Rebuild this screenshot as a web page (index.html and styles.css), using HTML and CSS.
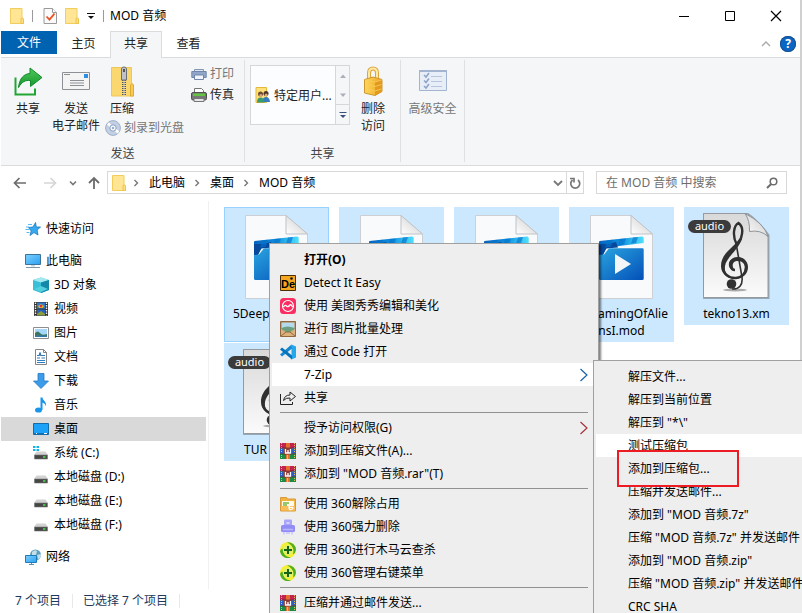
FILE: index.html
```html
<!DOCTYPE html>
<html lang="zh-CN">
<head>
<meta charset="utf-8">
<title>MOD 音频</title>
<link rel="stylesheet" href="styles.css">
</head>
<body>
<svg class="defs" aria-hidden="true">
  <defs>
    <linearGradient id="gBlue" x1="0" y1="0" x2="1" y2="1"><stop offset="0" stop-color="#2aa5e0"/><stop offset="1" stop-color="#0450b8"/></linearGradient>
    <linearGradient id="gStrip" x1="0" y1="0" x2="1" y2="0"><stop offset="0" stop-color="#0562bd"/><stop offset=".5" stop-color="#0e8fdf"/><stop offset="1" stop-color="#4fe0fd"/></linearGradient>
    <linearGradient id="gPage" x1="0" y1="0" x2="0" y2="1"><stop offset="0" stop-color="#d9d9d9"/><stop offset="1" stop-color="#fbfbfb"/></linearGradient>
    <linearGradient id="gFold" x1="0" y1="1" x2="1" y2="0"><stop offset="0" stop-color="#fff"/><stop offset="1" stop-color="#c9c9c9"/></linearGradient>
    <linearGradient id="gGreen" x1="0" y1="0" x2="0" y2="1"><stop offset="0" stop-color="#4fc95a"/><stop offset="1" stop-color="#15962e"/></linearGradient>
    <linearGradient id="gGold" x1="0" y1="0" x2="1" y2="0"><stop offset="0" stop-color="#ffd75a"/><stop offset="1" stop-color="#eda41f"/></linearGradient>
    <linearGradient id="gScreen" x1="0" y1="0" x2="1" y2="1"><stop offset="0" stop-color="#7cd0ff"/><stop offset="1" stop-color="#2ba0f0"/></linearGradient>
  </defs>
  <symbol id="folder" viewBox="0 0 14 16"><path d="M.5.5h11.500v9.500l1.500 1v4.500H.5z" fill="#ffe594" stroke="#f2cd5c"/><path d="M11 15.500v-5l1.500-.5 1 1v4.500z" fill="#ffe07c" stroke="#edc350"/></symbol>
  <symbol id="doc-check" viewBox="0 0 14 16"><path d="M1 .5h8.500l4 4v11H1z" fill="#fafafa" stroke="#9a9a9a"/><path d="M9.500.5v4h4" fill="#fff" stroke="#9a9a9a"/><path d="M3.500 8.500l3 3.200 5-6" fill="none" stroke="#e85326" stroke-width="1.800"/></symbol>
  <symbol id="share-big" viewBox="0 0 32 32"><path d="M3.500 11.500v17h19.500v-6" fill="none" stroke="#22a535" stroke-width="2"/><path d="M6.500 21.500C7.500 12 12 8 18 7.500V2l12 9.500-11.500 9v-6c-5-.5-8.500 1-12 7z" fill="url(#gGreen)" stroke="#128b2c"/></symbol>
  <symbol id="mail" viewBox="0 0 32 32"><path d="M2.500 6.500h27v17h-27z" fill="#f4f4f4" stroke="#8d9196"/><path d="M24 8h4v4h-4z" fill="#2c8fe6"/><path d="M4 8.500h6M10 14.500h14M10 17h14M10 19.500h14" stroke="#8d9196"/></symbol>
  <symbol id="zip" viewBox="0 0 32 32"><path d="M5.500 1.500h20v16l2 1.500v11h-22z" fill="#fbd86f" stroke="#efc65a"/><path d="M24.500 30v-11l1.500-1.500 1.500 1.500v11z" fill="#f9ca4f" stroke="#e0ab31"/><path d="M18 12v18" stroke="#555" stroke-width="4" stroke-dasharray="1 1"/><path d="M18 12v18" stroke="#d8d8d8"/><path d="M15.500 3q0-2 2.500-2t2.500 2v11h-5z" fill="#bfc3c8" stroke="#6c7076"/><path d="M17 3h2v3h-2z" fill="#555"/></symbol>
  <symbol id="disc" viewBox="0 0 16 16"><circle cx="8" cy="8" r="7.400" fill="#c3d0e3" stroke="#9fb0c9"/><path d="M3 3.500l3 3M10 9.500l3.500 3" stroke="#fff" stroke-width="2.500"/><circle cx="8" cy="8" r="3.200" fill="#eff4fa" stroke="#8ba0c2"/><circle cx="8" cy="8" r="1" fill="#7f96bb"/></symbol>
  <symbol id="printer" viewBox="0 0 16 16"><path d="M3.500 3.500h9v3h-9z" fill="#dce5f2" stroke="#8296b6"/><path d="M.8 5.500h14.400v6H.8z" fill="#91a6c8" stroke="#7186a9"/><path d="M3.500 9h9v4.500h-9z" fill="#f0f5fc" stroke="#7186a9"/></symbol>
  <symbol id="fax" viewBox="0 0 16 16"><path d="M3.500 5.500v-4h7l2 2v2" fill="#fff" stroke="#777"/><rect x=".5" y="5.500" width="15" height="7.500" rx="1.500" fill="#777" stroke="#4e4e4e"/><path d="M2 6.500h12v2.500H2z" fill="#66c342"/><path d="M3 11.500h10v3H3z" fill="#e6e6e6" stroke="#777"/></symbol>
  <symbol id="users" viewBox="0 0 16 16"><path d="M1 .5h10.500v15H1z" fill="#ffe07a" stroke="#e3b93c"/><circle cx="5.500" cy="7" r="2.500" fill="#704b31"/><circle cx="11" cy="6.500" r="2.500" fill="#4d3527"/><path d="M7.500 15q0-5 3.500-5t4 5z" fill="#337cc0"/><path d="M2 15.500q0-5 3.500-5t4 5z" fill="#389a72"/><circle cx="5.800" cy="8.500" r="1.500" fill="#dba77b"/><circle cx="11.200" cy="8" r="1.500" fill="#dba77b"/></symbol>
  <symbol id="lock" viewBox="0 0 32 32"><path d="M12 14V7q0-4.500 4-4.500t4 4.500v8" fill="none" stroke="#dba63a" stroke-width="4"/><path d="M12 14V7q0-4.500 4-4.500t4 4.500v8" fill="none" stroke="#ffe8a8" stroke-width="2"/><path d="M7.500 13.500L16 11l9 2.500v12L18 29.500 7.500 27z" fill="url(#gGold)" stroke="#cf9630"/><path d="M18 16l7-2.500v12l-7 4z" fill="#e39a1c"/><path d="M8 14l10 2 6.500-2M8 18.500l10 2 6.500-2M8 23l10 2 6.500-2" fill="none" stroke="#f7cd63" stroke-width=".8"/></symbol>
  <symbol id="security" viewBox="0 0 32 32"><path d="M2.500 4.500h27v20h-27z" fill="#e7eef8" stroke="#a3b4d1"/><path d="M2 4h28v2H2z" fill="#a3b4d1"/><path d="M7 9l2 2 3-4M7 14.500l2 2 3-4M7 20l2 2 3-4" fill="none" stroke="#8ea3c5" stroke-width="1.500"/><path d="M14 10.500h11M14 15.500h11M14 20.500h11" stroke="#b6c5dc"/></symbol>
  <symbol id="star" viewBox="0 0 16 16"><path d="M10.500 1.500l.8 4.500h4.200l-3.400 3 .9 5-4-2.500-4 3 1.200-4.500L3.500 6.500l4.500-.5z" fill="#36a9ef" stroke="#1879c4" stroke-width=".8"/><path d="M3 3.500h4M1 6h3M.5 8.500h4M1.500 11.500h3" stroke="#5db9f1"/></symbol>
  <symbol id="pc" viewBox="0 0 16 16"><path d="M.5 1.500h15v10H.5z" fill="url(#gScreen)" stroke="#3a749b"/><path d="M6 12h4v1.500H6z" fill="#c6d4de"/><path d="M1 14.500h14" stroke="#8296a4"/></symbol>
  <symbol id="cube" viewBox="0 0 16 16"><path d="M8 .5l8 2.500v10l-8 3-8-3V3z" fill="#39bfd7"/><path d="M0 3l8-2.500L16 3 8 5.500z" fill="#a4e8f0"/><path d="M8 5.500L16 3v10l-8 3z" fill="#1389aa"/><path d="M1 12l7-3 7 3-7 3z" fill="#52d0dd"/></symbol>
  <symbol id="film" viewBox="0 0 16 16"><path d="M1 1h14v14H1z" fill="#333"/><path d="M4 1.500h8v6H4z" fill="#3178cb"/><path d="M4 8.500h8v6H4z" fill="#2662b9"/><path d="M5 5l3-2 3 2-1 2H6z" fill="#e0b52e"/><path d="M4 13l4-3 4 3v1.500H4z" fill="#8c9c38"/><circle cx="8" cy="5" r="1.300" fill="#d8343b"/><path d="M2.500 1.500v13M13.500 1.500v13" stroke="#eee" stroke-width="1.400" stroke-dasharray="1.500 1"/></symbol>
  <symbol id="picture" viewBox="0 0 16 16"><path d="M.5 2.500h15v11H.5z" fill="#fff" stroke="#8e8e8e"/><path d="M2 4h12v8H2z" fill="#a6d7fa"/><path d="M2 8q3-3 5 0t7 1v3H2z" fill="#3d7461"/><path d="M2 10.500h12V12H2z" fill="#3278ac"/></symbol>
  <symbol id="document" viewBox="0 0 16 16"><path d="M2.500.5h8l3 3v12h-11z" fill="#fff" stroke="#858585"/><path d="M10.500.5v3h3" fill="none" stroke="#858585"/><path d="M4 6.500h2l1-3 1 3h4M4 9h3M8.500 9H12M4 11.500h8M4 13.500h8" stroke="#2d7fc1"/></symbol>
  <symbol id="download" viewBox="0 0 16 16"><path d="M5 .5h6V8h4.500L8 15.500.5 8H5z" fill="#3c9cea" stroke="#2479c1" stroke-width=".8"/></symbol>
  <symbol id="music" viewBox="0 0 16 16"><ellipse cx="5.500" cy="13" rx="3.500" ry="2.600" fill="#1996ea"/><path d="M7.500.5h2c0 3 4.500 4 3.500 9-.5-3-3-3.500-3.500-4V13h-2z" fill="#1996ea"/></symbol>
  <symbol id="desktop" viewBox="0 0 16 16"><path d="M.5 2.500h15v11H.5z" fill="#1ca2f8" stroke="#176ca8"/><path d="M1 12.500h14" stroke="#0875bb"/><path d="M3 12.500h1M11 12.500h3" stroke="#fff"/></symbol>
  <symbol id="drive" viewBox="0 0 16 16"><path d="M3.500 6.500h9L15 10H1z" fill="#d2d2d2"/><path d="M1.500 10h13v4h-13z" fill="#454545" stroke="#777" stroke-width=".6"/><path d="M10 12h2.500" stroke="#4de34d" stroke-width="1.500"/></symbol>
  <symbol id="winlogo" viewBox="0 0 16 16"><path d="M0 1h2.500v2H0zM3.500 1H6v2H3.500zM0 4h2.500v2H0zM3.500 4H6v2H3.500z" fill="#15b1ea"/></symbol>
  <symbol id="network" viewBox="0 0 16 16"><circle cx="10.500" cy="6" r="5.500" fill="#5f9fbb"/><path d="M7 3q3-3 5-1l-1 4-4 1zM12 6l4-1q0 5-3 5z" fill="#c4dfe8"/><path d="M.5 6.500h11v7H.5z" fill="url(#gScreen)" stroke="#207cb9"/><path d="M4 15.500h5M6.500 14v1" stroke="#638fa9"/></symbol>
  <symbol id="mod-file" viewBox="0 0 105 92"><path d="M21.500 8.500H62L83.500 27v64.500h-62z" fill="#f9fafb" stroke="#ccd0d5"/><path d="M62 8.500V27h21.500z" fill="url(#gFold)" stroke="#bec3c8"/><path d="M30.500 34L73 29.500q1.700 0 1.700 1.500v5L38 40.500l-4 7h-4V35z" fill="url(#gStrip)"/><path d="M30 37h9l8-2 2 5.500-12 1-3 6.500h-4z" fill="#06489b"/><path d="M38 33.500l6-.7-2 7-6 .8zM51 32l6-.6-2 6.200-6 .8zM64 30.500l5-.5-2 6-5 .7z" fill="#0671ca" opacity=".65"/><path d="M30 48l5-.5 4-5q.5-1.200 2-1.200h32.500q1.200 0 1.200 1.200v29q0 1.500-1.500 1.500H31.500Q30 73 30 71.500z" fill="url(#gBlue)"/><path d="M46 47l16 10-16 10z" fill="#f4f5f6"/></symbol>
  <symbol id="audio-file" viewBox="0 0 105 92"><path d="M20 7h44q8 5 20.500 21v63.500H20z" fill="none" stroke="#6c747c" stroke-width="2" opacity=".55"/><path d="M19.500 6.500H63Q78 17 84 28v62.500H19.500z" fill="url(#gPage)" stroke="#969a9e"/><path d="M61 6.500q5 7 4.500 18 11-2 18.500 5Q80 16 61 6.500z" fill="url(#gFold)" stroke="#8f9498"/><ellipse cx="51" cy="83" rx="12" ry="1.500" fill="#aaa"/><path d="M52.500 37C48 28 50 18 54.500 16 58.500 19 59 25 57 31 53 40 39 46 39 59 39 67 45 71.500 52 71 58 70.500 62 66 62 60 62 54.500 58 51.500 54 51.500 49 51.500 45.500 55 46.500 59 47 61.500 49 63 51 63" fill="none" stroke="#303030" stroke-width="2.400"/><path d="M57 32C50 40 37 46 37 59c0 9 8 13 15 13C43 71 40 65 41 59c1-8 13-16 17-27zM54 50c-6 0-10 4-9 9 1 3 3 4 6 4-3-2-4-9 3-9 4 0 7 3 7 6 0 7-5 11-9 12 8-1 12-6 12-12s-5-10-10-10z" fill="#303030"/><path d="M52 36l6 34c1 8-3 12.500-10 12" fill="none" stroke="#303030" stroke-width="1.600"/><circle cx="47.500" cy="77" r="4.800" fill="#303030"/></symbol>
  <symbol id="meitu" viewBox="0 0 16 16"><rect width="16" height="16" rx="3.500" fill="#fb2d61"/><circle cx="8" cy="8" r="5.500" fill="none" stroke="#fff" stroke-width="1.200"/><path d="M3.500 9Q5 6.500 6.500 8t3-.5T12.500 9" fill="none" stroke="#fff" stroke-width="1.300"/></symbol>
  <symbol id="batch" viewBox="0 0 16 16"><path d="M.5.500h15v15H.5z" fill="#b57a42" stroke="#94683f"/><path d="M1.500 1.500h13V9h-13z" fill="#b4daee"/><path d="M1.500 7q6-3 13 0v4h-13z" fill="#6b9f80"/><path d="M1 8l5 3h4l5-3v7H1z" fill="#dcb27c"/><path d="M1 15l5-4h4l5 4" fill="none" stroke="#94683f"/></symbol>
  <symbol id="vscode" viewBox="0 0 16 16"><path d="M11.500.5L16 2.500v11l-4.500 2z" fill="#25a7ed"/><path d="M11.500.5L0 10.500 2 12.500 12 4.500z" fill="#1787ce"/><path d="M0 5.500l2-2 10 8v4z" fill="#0873ba"/></symbol>
  <symbol id="share-line" viewBox="0 0 16 16"><path d="M.5 4v10.500h12V12" fill="none" stroke="#222"/><path d="M3.500 10.500Q4.500 5 10 5V2l5.500 4.500L10 11V8q-4-.5-6.500 2.500z" fill="none" stroke="#222"/></symbol>
  <symbol id="winrar" viewBox="0 0 16 16"><path d="M0 0h16v5H0z" fill="#c32350"/><path d="M0 5.500h16v5H0z" fill="#2b5fc6"/><path d="M0 11h16v5H0z" fill="#1d8a45"/><path d="M1.500 0v16M14.500 0v16" stroke="#eac357" stroke-dasharray="1 1"/><path d="M0 5.200h16M0 10.700h16" stroke="#20203a" stroke-width=".8"/><path d="M6 0h4v16H6z" fill="#e5702b"/><path d="M4 4.500h8v7H4z" fill="#8c3a35"/><path d="M5.500 6v4h5V6M8 7v3" fill="none" stroke="#fff" stroke-width="1.300"/><path d="M7.500 12v4" stroke="#f3be6b"/></symbol>
  <symbol id="unlock360" viewBox="0 0 16 16"><path d="M.5 1.500h6l1 1.500h8v12H.5z" fill="#f4b33e" stroke="#d99a38"/><path d="M2 5h12v5H2z" fill="#fffbe5"/><path d="M3 7h6M3 9h4" stroke="#79b545" stroke-width="1.500"/><path d="M1 10h14v4.500H1z" fill="#f9be5a"/><path d="M12 8Q9 9 9 11.500t2 2 2-1.500-3.500-.500" fill="none" stroke="#fff" stroke-width="1.200"/></symbol>
  <symbol id="shred360" viewBox="0 0 16 16"><rect x="4" y=".5" width="8" height="7" rx="1" fill="#a9a5fb"/><path d="M6.500 4h3" stroke="#fff"/><rect x="1" y="6" width="14" height="7" rx="1.500" fill="#928cf5"/><path d="M3 10.500h10" stroke="#b9b5ff" stroke-width="1.500"/><path d="M4 13v2.500M12 13v2.500M6 14h4" stroke="#c5c2ff" stroke-width="1.500"/></symbol>
  <symbol id="plus360" viewBox="0 0 16 16"><circle cx="8" cy="8" r="8" fill="#f3ef35"/><path d="M7 .2A8 8 0 0 1 16 8q-.5 3-3 4.500Q15 4 7 .2z" fill="#4fae24"/><path d="M0 9a8 8 0 0 0 11 6.500Q3 15 2.500 6.500 .5 7 0 9z" fill="#4fae24"/><circle cx="8" cy="8" r="5" fill="#dff06a"/><path d="M8 4v8M4 8h8" stroke="#14641c" stroke-width="2"/></symbol>
  <symbol id="chev" viewBox="0 0 8 8"><path d="M2.500 1l3 3-3 3" fill="none" stroke="#777" stroke-width="1.400"/></symbol>
  <symbol id="chev-down" viewBox="0 0 10 10"><path d="M1 3l4 4 4-4" fill="none" stroke="#777" stroke-width="1.800"/></symbol>
  <symbol id="sub-arrow" viewBox="0 0 10 14"><path d="M1.500 1L8 7l-6.500 6" fill="none" stroke="currentColor" stroke-width="1.200"/></symbol>
</svg>

<div class="window">
  <header class="titlebar">
    <svg class="folder"><use href="#folder"/></svg>
    <span class="bar"></span>
    <svg class="folder"><use href="#doc-check"/></svg>
    <svg class="folder"><use href="#folder"/></svg>
    <button class="quick" aria-label="自定义快速访问工具栏"><svg viewBox="0 0 8 8"><path d="M0 1.500h8" stroke="#111"/><path d="M1 4h6L4 7z" fill="#111"/></svg></button>
    <span class="bar"></span>
    <h1>MOD 音频</h1>
    <div class="controls">
      <button aria-label="最小化"><svg viewBox="0 0 12 12"><path d="M1 6.500h10" stroke="#000"/></svg></button>
      <button aria-label="最大化"><svg viewBox="0 0 12 12"><path d="M1.500 1.500h9v9h-9z" fill="none" stroke="#000"/></svg></button>
      <button aria-label="关闭"><svg viewBox="0 0 12 12"><path d="M1 1l10 10M11 1L1 11" stroke="#000" stroke-width="1.200"/></svg></button>
    </div>
  </header>

  <nav class="tabs">
    <button class="tab file">文件</button>
    <button class="tab">主页</button>
    <button class="tab active">共享</button>
    <button class="tab">查看</button>
    <div class="tabs-end">
      <button class="collapse" aria-label="折叠功能区"><svg viewBox="0 0 10 10"><path d="M1 7l4-4 4 4" fill="none" stroke="#aaa" stroke-width="1.400"/></svg></button>
      <button class="help">?</button>
    </div>
  </nav>

  <section class="ribbon">
    <div class="group">
      <div class="group-body">
        <button class="big"><svg><use href="#share-big"/></svg>共享</button>
        <button class="big wide"><svg><use href="#mail"/></svg>发送<br>电子邮件</button>
        <div class="stack">
          <button class="big zip"><svg><use href="#zip"/></svg>压缩</button>
          <button class="small muted"><svg><use href="#disc"/></svg>刻录到光盘</button>
        </div>
        <div class="pair">
          <button class="small muted"><svg><use href="#printer"/></svg>打印</button>
          <button class="small"><svg><use href="#fax"/></svg>传真</button>
        </div>
      </div>
      <div class="group-name">发送</div>
    </div>
    <div class="group">
      <div class="group-body">
        <div class="gallery">
          <button class="gallery-item"><svg><use href="#users"/></svg>特定用户...</button>
          <div class="gallery-scroll">
            <button aria-label="上一行"><svg viewBox="0 0 8 8"><path d="M1 6h6L4 2.500z" fill="#aaafb8"/></svg></button>
            <button aria-label="下一行"><svg viewBox="0 0 8 8"><path d="M1 2.500h6L4 6z" fill="#aaafb8"/></svg></button>
            <button aria-label="更多"><svg viewBox="0 0 8 8"><path d="M.5 1.500h7" stroke="#37517a"/><path d="M1 4h6L4 7z" fill="#37517a"/></svg></button>
          </div>
        </div>
        <button class="big"><svg><use href="#lock"/></svg>删除<br>访问</button>
      </div>
      <div class="group-name">共享</div>
    </div>
    <div class="group">
      <div class="group-body">
        <button class="big security muted"><svg><use href="#security"/></svg>高级安全</button>
      </div>
      <div class="group-name"></div>
    </div>
  </section>

  <div class="navbar">
    <button class="nav-btn" aria-label="后退"><svg viewBox="0 0 14 14"><path d="M13 7H2M6.500 2L1.500 7l5 5" fill="none" stroke="#6c6c6c" stroke-width="1.700"/></svg></button>
    <button class="nav-btn" aria-label="前进"><svg viewBox="0 0 14 14"><path d="M1 7h11M7.500 2l5 5-5 5" fill="none" stroke="#d6d6d6" stroke-width="1.700"/></svg></button>
    <button class="nav-btn narrow" aria-label="最近位置"><svg viewBox="0 0 10 10"><path d="M2 3.500l3 3 3-3" fill="none" stroke="#777" stroke-width="1.600"/></svg></button>
    <button class="nav-btn up" aria-label="上移"><svg viewBox="0 0 14 14"><path d="M7 13V2M2 7l5-5 5 5" fill="none" stroke="#6c6c6c" stroke-width="1.800"/></svg></button>
    <div class="address">
      <svg class="folder"><use href="#folder"/></svg>
      <svg class="sep"><use href="#chev"/></svg>
      <a href="#">此电脑</a>
      <svg class="sep"><use href="#chev"/></svg>
      <a href="#">桌面</a>
      <svg class="sep"><use href="#chev"/></svg>
      <a href="#">MOD 音频</a>
      <button class="drop" aria-label="历史"><svg><use href="#chev-down"/></svg></button>
      <button class="refresh" aria-label="刷新"><svg viewBox="0 0 12 12"><path d="M9 3A4.500 4.500 0 1 1 3.500 3M1 1.500h4V5.500" fill="none" stroke="#777" stroke-width="1.700"/></svg></button>
    </div>
    <label class="search">
      <input type="text" placeholder="在 MOD 音频 中搜索" aria-label="搜索">
      <svg viewBox="0 0 12 12"><circle cx="7.500" cy="4.500" r="3.300" fill="none" stroke="#6c6c6c" stroke-width="1.500"/><path d="M5.200 7L1 11" stroke="#6c6c6c" stroke-width="2"/></svg>
    </label>
  </div>

  <main class="content">
    <nav class="sidebar">
      <a href="#" class="root"><svg><use href="#star"/></svg>快速访问</a>
      <div class="tree">
        <a href="#" class="root"><svg><use href="#pc"/></svg>此电脑</a>
        <a href="#"><svg><use href="#cube"/></svg>3D 对象</a>
        <a href="#"><svg><use href="#film"/></svg>视频</a>
        <a href="#"><svg><use href="#picture"/></svg>图片</a>
        <a href="#"><svg><use href="#document"/></svg>文档</a>
        <a href="#"><svg><use href="#download"/></svg>下载</a>
        <a href="#"><svg><use href="#music"/></svg>音乐</a>
        <a href="#" class="current"><svg><use href="#desktop"/></svg>桌面</a>
        <a href="#"><svg><use href="#drive"/><use href="#winlogo"/></svg>系统 (C:)</a>
        <a href="#"><svg><use href="#drive"/></svg>本地磁盘 (D:)</a>
        <a href="#"><svg><use href="#drive"/></svg>本地磁盘 (E:)</a>
        <a href="#"><svg><use href="#drive"/></svg>本地磁盘 (F:)</a>
      </div>
      <a href="#" class="root"><svg><use href="#network"/></svg>网络</a>
    </nav>

    <section class="files">
      <button class="tile focus from-left"><svg><use href="#mod-file"/></svg><span>5Deep</span></button>
      <button class="tile" aria-label="MOD 文件"><svg><use href="#mod-file"/></svg></button>
      <button class="tile" aria-label="MOD 文件"><svg><use href="#mod-file"/></svg></button>
      <button class="tile from-right"><svg><use href="#mod-file"/></svg><span>amingOfAlie</span><span class="rest">nsI.mod</span></button>
      <button class="tile"><svg><use href="#audio-file"/></svg><i class="badge">audio</i><span>tekno13.xm</span></button>
      <button class="tile indent"><svg><use href="#audio-file"/></svg><i class="badge">audio</i><span>TUR</span></button>
    </section>
  </main>

  <footer class="status"><span>7 个项目</span><span>已选择 7 个项目</span></footer>
</div>

<div class="menu main-menu" role="menu">
  <button role="menuitem" class="default">打开(O)</button>
  <button role="menuitem"><svg viewBox="0 0 16 16"><path d="M.5.500h15v15H.5z" fill="#f4a71f" stroke="#4c2d08"/><text x="1" y="13" class="de">De</text><circle cx="11.500" cy="3.500" r="1.300" fill="#111"/></svg>Detect It Easy</button>
  <button role="menuitem"><svg><use href="#meitu"/></svg>使用 美图秀秀编辑和美化</button>
  <button role="menuitem"><svg><use href="#batch"/></svg>进行 图片批量处理</button>
  <button role="menuitem"><svg><use href="#vscode"/></svg>通过 Code 打开</button>
  <button role="menuitem" class="hover">7-Zip<svg class="arrow blue"><use href="#sub-arrow"/></svg></button>
  <button role="menuitem"><svg><use href="#share-line"/></svg>共享</button>
  <hr>
  <button role="menuitem">授予访问权限(G)<svg class="arrow red"><use href="#sub-arrow"/></svg></button>
  <button role="menuitem"><svg><use href="#winrar"/></svg>添加到压缩文件(A)...</button>
  <button role="menuitem"><svg><use href="#winrar"/></svg>添加到 "MOD 音频.rar"(T)</button>
  <hr>
  <button role="menuitem"><svg><use href="#unlock360"/></svg>使用 360解除占用</button>
  <button role="menuitem"><svg><use href="#shred360"/></svg>使用 360强力删除</button>
  <button role="menuitem"><svg><use href="#plus360"/></svg>使用 360进行木马云查杀</button>
  <button role="menuitem"><svg><use href="#plus360"/></svg>使用 360管理右键菜单</button>
  <hr>
  <button role="menuitem"><svg><use href="#winrar"/></svg>压缩并通过邮件发送...</button>
</div>

<div class="menu sub-menu" role="menu">
  <button role="menuitem">解压文件...</button>
  <button role="menuitem">解压到当前位置</button>
  <button role="menuitem">解压到 "*\"</button>
  <button role="menuitem" class="hover">测试压缩包</button>
  <button role="menuitem" class="marked">添加到压缩包...</button>
  <button role="menuitem">压缩并发送邮件...</button>
  <button role="menuitem">添加到 "MOD 音频.7z"</button>
  <button role="menuitem">压缩 "MOD 音频.7z" 并发送邮件</button>
  <button role="menuitem">添加到 "MOD 音频.zip"</button>
  <button role="menuitem">压缩 "MOD 音频.zip" 并发送邮件</button>
  <button role="menuitem">CRC SHA</button>
</div>
</body>
</html>
```
FILE: styles.css
```css
*, *::before { box-sizing: border-box; }

body {
  margin: 0;
  height: 100vh;
  overflow: hidden;
  position: relative;
  background: #d0d0d0;
  color: #000;
  font: 12px/17px "Noto Sans", "Noto Sans CJK SC", sans-serif;
}

button, input {
  margin: 0;
  padding: 0;
  border: 0;
  background: none;
  color: inherit;
  font: inherit;
}

a { color: inherit; text-decoration: none; }
svg { display: block; flex: none; width: 16px; height: 16px; }
.defs { position: absolute; width: 0; height: 0; }
.folder { width: 14px; height: 16px; }

.window {
  display: flex;
  flex-direction: column;
  height: 100%;
  margin-right: 2px;
  padding-left: 1px;
  background: #fff;
}

/* Title bar */
.titlebar { display: flex; align-items: center; gap: 8px; height: 31px; padding-left: 9px; }
.titlebar h1 { margin: 0; font-size: 12px; font-weight: 400; }
.titlebar .bar { width: 1px; height: 12px; margin-right: 2px; background: #9a9a9a; }
.titlebar .bar + h1 { margin-left: -4px; }
.quick svg { width: 8px; height: 8px; }
.controls { display: flex; margin-left: auto; padding-right: 1px; }
.controls button { display: grid; place-items: center; width: 46px; height: 31px; }
.controls svg { width: 12px; height: 12px; }

/* Tabs */
.tabs { display: flex; height: 27px; border-bottom: 1px solid #dadbdc; }
.tab { width: 53px; height: 24px; color: #222; }
.tab.file { width: 56px; height: 23px; background: #0063b1; color: #fff; }
.tab.active { width: 52px; height: 27px; padding-bottom: 3px; border: 1px solid #dadbdc; border-bottom: 0; background: #f4f6f8; }
.tabs-end { display: flex; align-items: center; gap: 9px; margin-left: auto; padding-right: 4px; }
.collapse svg { width: 10px; height: 10px; }
.help { width: 16px; height: 16px; border-radius: 50%; background: #0a66c4; box-shadow: inset 0 0 0 1px #17508c; color: #fff; font-weight: 700; line-height: 16px; }

/* Ribbon */
.ribbon { display: flex; height: 108px; padding: 2px 0 3px; border-bottom: 1px solid #dadbdc; background: #f4f6f8; color: #222; }
.group { display: flex; flex-direction: column; justify-content: space-between; padding: 0 4px; border-right: 1px solid #dfe0e2; }
.group-body { display: flex; align-items: flex-start; }
.group-name { height: 17px; color: #444; text-align: center; }
.big { display: flex; flex-direction: column; align-items: center; gap: 2px; width: 46px; padding-top: 6px; text-align: center; white-space: nowrap; }
.big svg { width: 32px; height: 32px; }
.big.wide { width: 50px; }
.big.zip { width: 34px; }
.big.security { width: 55px; }
.small { display: flex; align-items: center; gap: 3px; height: 21px; white-space: nowrap; }
.stack { padding-left: 4px; }
.pair { padding: 3px 6px 0 7px; }
.muted { color: #777; }
.gallery { display: flex; width: 100px; height: 60px; margin: 5px 0 0 1px; border: 1px solid #d5d7da; background: #fcfdfe; }
.gallery-item { display: flex; flex: 1; align-items: center; gap: 3px; padding-left: 4px; white-space: nowrap; }
.gallery-scroll { display: flex; flex-direction: column; width: 14px; border-left: 1px solid #d5d7da; background: #f4f6f8; }
.gallery-scroll button { display: grid; flex: 1; place-items: center; }
.gallery-scroll svg { width: 8px; height: 8px; }
.gallery-scroll button:last-child { border-top: 1px solid #d5d7da; }

/* Address row */
.navbar { display: flex; align-items: flex-start; height: 35px; padding: 5px 13px 0 4px; }
.nav-btn { display: grid; place-items: center; width: 30px; height: 24px; }
.nav-btn svg { width: 14px; height: 14px; }
.nav-btn.narrow { width: 16px; }
.nav-btn.narrow svg { width: 10px; height: 10px; }
.nav-btn.up { width: 26px; }
.address { display: flex; flex: 1; align-items: center; height: 23px; padding-left: 4px; border: 1px solid #d9d9d9; white-space: nowrap; }
.address a { margin-right: 8px; }
.sep { width: 8px; height: 8px; margin-right: 9px; }
.address .folder { margin-right: 6px; }
.drop, .refresh { display: grid; place-items: center; width: 17px; height: 21px; }
.drop { margin-left: auto; }
.drop svg { width: 10px; height: 10px; }
.refresh { border-left: 1px solid #d9d9d9; }
.refresh svg { width: 12px; height: 12px; }
.search { display: flex; align-items: center; width: 191px; height: 23px; margin-left: 12px; padding: 0 8px 0 9px; border: 1px solid #d9d9d9; }
.search input { flex: 1; min-width: 0; outline: 0; }
.search input::placeholder { color: #6d6d6d; opacity: 1; }
.search svg { width: 12px; height: 12px; }

/* Folder tree */
.content { display: flex; flex: 1; min-height: 0; }
.sidebar { display: flex; flex-direction: column; gap: 8px; width: 208px; padding: 16px 2px 0 0; border-right: 1px solid #f0f0f0; }
.sidebar a { display: flex; align-items: center; gap: 5px; height: 24px; padding: 0 0 1px 32px; }
.sidebar a.root { padding-left: 24px; }
.sidebar a.current { background: #d9d9d9; }

/* Files */
.files { display: grid; flex: 1; grid-template-columns: repeat(auto-fill, 105px); align-content: start; align-items: start; gap: 1px 10px; padding: 6px 0 0 15px; }
.tile { position: relative; display: flex; flex-direction: column; align-items: center; min-height: 118px; background: #cce8ff; }
.tile svg { width: 105px; height: 92px; margin-bottom: 6px; }
.tile.focus { height: 135px; box-shadow: inset 0 0 0 1px #99d1ff; }
.tile.from-left span { align-self: flex-start; padding-left: 9px; }
.tile.from-right { padding-bottom: 3px; }
.tile.from-right span { align-self: flex-end; padding-right: 6px; }
.tile.from-right .rest { align-self: center; padding-right: 0; }
.tile.indent span { align-self: flex-start; padding-left: 20px; }
.badge { position: absolute; top: 13px; left: 4px; width: 43px; height: 13px; border-radius: 7px; background: #3b3b3b; color: #fff; font-size: 11px; font-style: normal; line-height: 12px; text-align: center; }

/* Status bar */
.status { display: flex; align-items: center; height: 24px; padding-left: 14px; color: #1e395b; }
.status span { margin-right: 10px; padding-right: 11px; border-right: 1px solid #e8e8e8; line-height: 14px; }

/* Context menus */
.menu { position: absolute; padding: 4px 2px; border: 1px solid #a0a0a0; background: #eee; line-height: 13px; white-space: nowrap; }
.menu button { position: relative; display: flex; align-items: center; width: 100%; height: 23px; padding-left: 32px; text-align: left; }
.menu button > svg:not(.arrow) { margin: 0 8px 0 -24px; }
.menu .hover { background: #fff; }
.menu .default { font-weight: 700; }
.menu hr { height: 1px; margin: 3px 8px; border: 0; background: #919191; }
.menu .arrow { width: 10px; height: 14px; margin: 0 7px 0 auto; }
.blue { color: #1763a6; }
.red { color: #a3343c; }
.main-menu { top: 243px; left: 269px; width: 330px; box-shadow: 2px 2px 2px rgba(0, 0, 0, .5); }
.sub-menu { top: 360px; right: 0; bottom: 0; left: 593px; overflow: hidden; padding-right: 0; border-right: 0; border-bottom: 0; }
.de { font: 900 11px "Liberation Sans", sans-serif; }

/* Callout around one command */
.menu .marked { z-index: 1; }
.marked::before {
  content: "";
  position: absolute;
  z-index: -1;
  top: -7px;
  bottom: -7px;
  left: 21px;
  width: 122px;
  border: 2px solid #ed1c24;
  background: #eee;
}
```
